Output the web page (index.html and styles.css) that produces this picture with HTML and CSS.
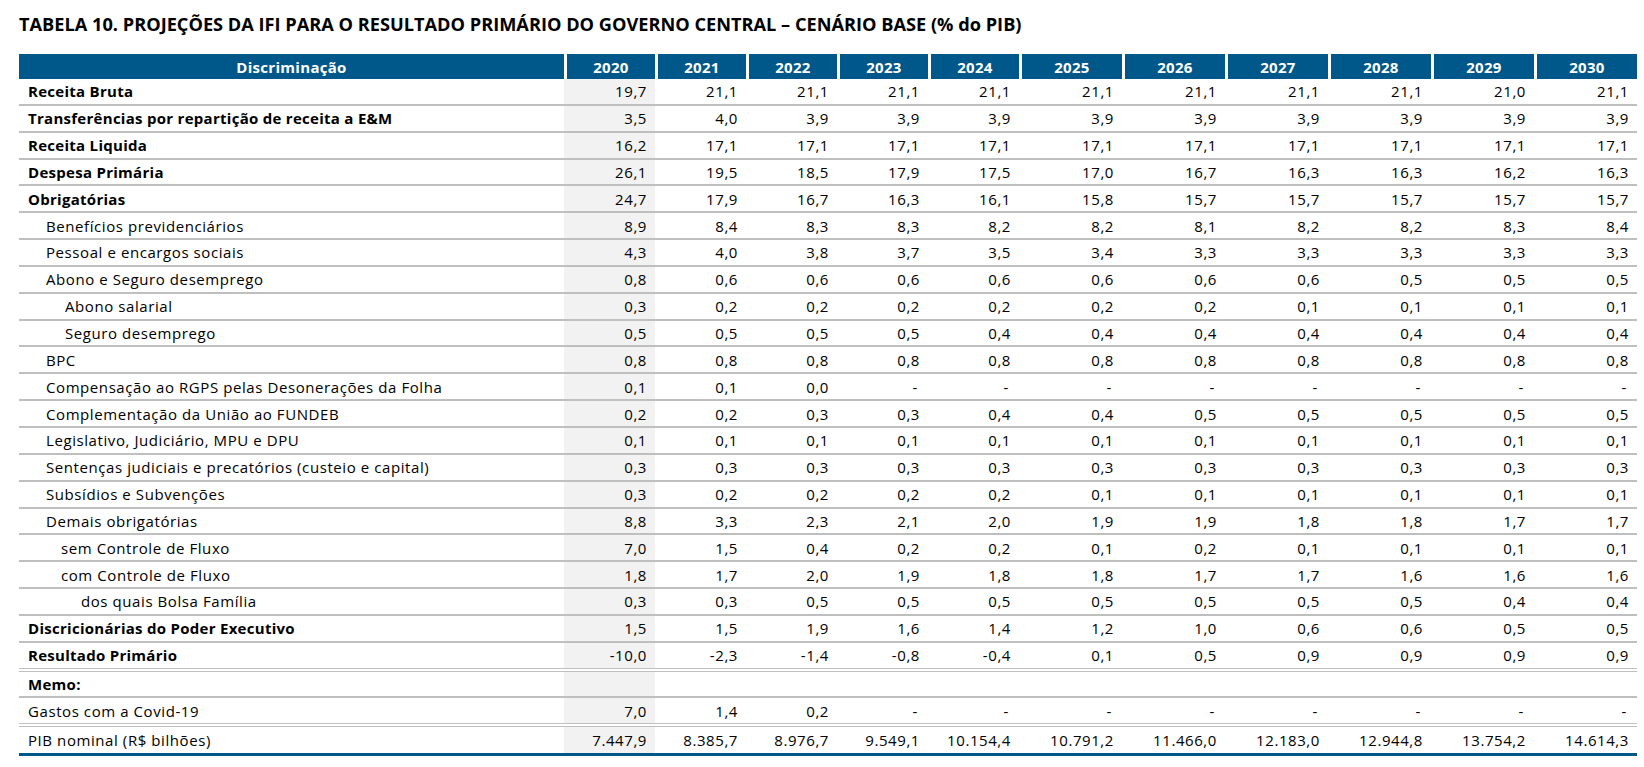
FILE: index.html
```html
<!DOCTYPE html>
<html lang="pt-BR">
<head>
<meta charset="utf-8">
<title>Tabela 10</title>
<link rel="stylesheet" href="styles.css">
</head>
<body>
<div class="page">
  <h1 class="title">TABELA 10. PROJEÇÕES DA IFI PARA O RESULTADO PRIMÁRIO DO GOVERNO CENTRAL – CENÁRIO BASE (% do PIB)</h1>
  <div class="tbl">
    <div class="grid hd">
      <div>Discriminação</div>
      <div class="y">2020</div><div class="y">2021</div><div class="y">2022</div><div class="y">2023</div><div class="y">2024</div>
      <div class="y">2025</div><div class="y">2026</div><div class="y">2027</div><div class="y">2028</div><div class="y">2029</div><div class="y">2030</div>
    </div>

    <div class="grid row"><div class="lab b">Receita Bruta</div><div class="g">19,7</div><div>21,1</div><div>21,1</div><div>21,1</div><div>21,1</div><div>21,1</div><div>21,1</div><div>21,1</div><div>21,1</div><div>21,0</div><div>21,1</div></div>
    <div class="grid row"><div class="lab b">Transferências por repartição de receita a E&amp;M</div><div class="g">3,5</div><div>4,0</div><div>3,9</div><div>3,9</div><div>3,9</div><div>3,9</div><div>3,9</div><div>3,9</div><div>3,9</div><div>3,9</div><div>3,9</div></div>
    <div class="grid row"><div class="lab b">Receita Liquida</div><div class="g">16,2</div><div>17,1</div><div>17,1</div><div>17,1</div><div>17,1</div><div>17,1</div><div>17,1</div><div>17,1</div><div>17,1</div><div>17,1</div><div>17,1</div></div>
    <div class="grid row"><div class="lab b">Despesa Primária</div><div class="g">26,1</div><div>19,5</div><div>18,5</div><div>17,9</div><div>17,5</div><div>17,0</div><div>16,7</div><div>16,3</div><div>16,3</div><div>16,2</div><div>16,3</div></div>
    <div class="grid row"><div class="lab b">Obrigatórias</div><div class="g">24,7</div><div>17,9</div><div>16,7</div><div>16,3</div><div>16,1</div><div>15,8</div><div>15,7</div><div>15,7</div><div>15,7</div><div>15,7</div><div>15,7</div></div>
    <div class="grid row"><div class="lab l1">Benefícios previdenciários</div><div class="g">8,9</div><div>8,4</div><div>8,3</div><div>8,3</div><div>8,2</div><div>8,2</div><div>8,1</div><div>8,2</div><div>8,2</div><div>8,3</div><div>8,4</div></div>
    <div class="grid row"><div class="lab l1">Pessoal e encargos sociais</div><div class="g">4,3</div><div>4,0</div><div>3,8</div><div>3,7</div><div>3,5</div><div>3,4</div><div>3,3</div><div>3,3</div><div>3,3</div><div>3,3</div><div>3,3</div></div>
    <div class="grid row"><div class="lab l1">Abono e Seguro desemprego</div><div class="g">0,8</div><div>0,6</div><div>0,6</div><div>0,6</div><div>0,6</div><div>0,6</div><div>0,6</div><div>0,6</div><div>0,5</div><div>0,5</div><div>0,5</div></div>
    <div class="grid row"><div class="lab l2">Abono salarial</div><div class="g">0,3</div><div>0,2</div><div>0,2</div><div>0,2</div><div>0,2</div><div>0,2</div><div>0,2</div><div>0,1</div><div>0,1</div><div>0,1</div><div>0,1</div></div>
    <div class="grid row"><div class="lab l2">Seguro desemprego</div><div class="g">0,5</div><div>0,5</div><div>0,5</div><div>0,5</div><div>0,4</div><div>0,4</div><div>0,4</div><div>0,4</div><div>0,4</div><div>0,4</div><div>0,4</div></div>
    <div class="grid row"><div class="lab l1">BPC</div><div class="g">0,8</div><div>0,8</div><div>0,8</div><div>0,8</div><div>0,8</div><div>0,8</div><div>0,8</div><div>0,8</div><div>0,8</div><div>0,8</div><div>0,8</div></div>
    <div class="grid row"><div class="lab l1">Compensação ao RGPS pelas Desonerações da Folha</div><div class="g">0,1</div><div>0,1</div><div>0,0</div><div class="d">-</div><div class="d">-</div><div class="d">-</div><div class="d">-</div><div class="d">-</div><div class="d">-</div><div class="d">-</div><div class="d">-</div></div>
    <div class="grid row"><div class="lab l1">Complementação da União ao FUNDEB</div><div class="g">0,2</div><div>0,2</div><div>0,3</div><div>0,3</div><div>0,4</div><div>0,4</div><div>0,5</div><div>0,5</div><div>0,5</div><div>0,5</div><div>0,5</div></div>
    <div class="grid row"><div class="lab l1">Legislativo, Judiciário, MPU e DPU</div><div class="g">0,1</div><div>0,1</div><div>0,1</div><div>0,1</div><div>0,1</div><div>0,1</div><div>0,1</div><div>0,1</div><div>0,1</div><div>0,1</div><div>0,1</div></div>
    <div class="grid row"><div class="lab l1">Sentenças judiciais e precatórios (custeio e capital)</div><div class="g">0,3</div><div>0,3</div><div>0,3</div><div>0,3</div><div>0,3</div><div>0,3</div><div>0,3</div><div>0,3</div><div>0,3</div><div>0,3</div><div>0,3</div></div>
    <div class="grid row"><div class="lab l1">Subsídios e Subvenções</div><div class="g">0,3</div><div>0,2</div><div>0,2</div><div>0,2</div><div>0,2</div><div>0,1</div><div>0,1</div><div>0,1</div><div>0,1</div><div>0,1</div><div>0,1</div></div>
    <div class="grid row"><div class="lab l1">Demais obrigatórias</div><div class="g">8,8</div><div>3,3</div><div>2,3</div><div>2,1</div><div>2,0</div><div>1,9</div><div>1,9</div><div>1,8</div><div>1,8</div><div>1,7</div><div>1,7</div></div>
    <div class="grid row"><div class="lab l2b">sem Controle de Fluxo</div><div class="g">7,0</div><div>1,5</div><div>0,4</div><div>0,2</div><div>0,2</div><div>0,1</div><div>0,2</div><div>0,1</div><div>0,1</div><div>0,1</div><div>0,1</div></div>
    <div class="grid row"><div class="lab l2b">com Controle de Fluxo</div><div class="g">1,8</div><div>1,7</div><div>2,0</div><div>1,9</div><div>1,8</div><div>1,8</div><div>1,7</div><div>1,7</div><div>1,6</div><div>1,6</div><div>1,6</div></div>
    <div class="grid row"><div class="lab l3">dos quais Bolsa Família</div><div class="g">0,3</div><div>0,3</div><div>0,5</div><div>0,5</div><div>0,5</div><div>0,5</div><div>0,5</div><div>0,5</div><div>0,5</div><div>0,4</div><div>0,4</div></div>
    <div class="grid row"><div class="lab b">Discricionárias do Poder Executivo</div><div class="g">1,5</div><div>1,5</div><div>1,9</div><div>1,6</div><div>1,4</div><div>1,2</div><div>1,0</div><div>0,6</div><div>0,6</div><div>0,5</div><div>0,5</div></div>
    <div class="grid row dbl"><div class="lab b">Resultado Primário</div><div class="g">-10,0</div><div>-2,3</div><div>-1,4</div><div>-0,8</div><div>-0,4</div><div>0,1</div><div>0,5</div><div>0,9</div><div>0,9</div><div>0,9</div><div>0,9</div></div>
    <div class="grid row"><div class="lab b">Memo:</div><div class="g"></div><div></div><div></div><div></div><div></div><div></div><div></div><div></div><div></div><div></div><div></div></div>
    <div class="grid row dbl"><div class="lab">Gastos com a Covid-19</div><div class="g">7,0</div><div>1,4</div><div>0,2</div><div class="d">-</div><div class="d">-</div><div class="d">-</div><div class="d">-</div><div class="d">-</div><div class="d">-</div><div class="d">-</div><div class="d">-</div></div>
    <div class="grid row pib"><div class="lab">PIB nominal (R$ bilhões)</div><div class="g">7.447,9</div><div>8.385,7</div><div>8.976,7</div><div>9.549,1</div><div>10.154,4</div><div>10.791,2</div><div>11.466,0</div><div>12.183,0</div><div>12.944,8</div><div>13.754,2</div><div>14.614,3</div></div>
  </div>
</div>
</body>
</html>
```

FILE: styles.css
```css
html, body {
  margin: 0;
  padding: 0;
  background: #ffffff;
}

body {
  font-family: "Open Sans", "Noto Sans", "Liberation Sans", sans-serif;
  color: #000000;
}

.page {
  padding: 12px 0 0 19px;
}

.title {
  margin: 0 0 18px 0;
  font-size: 18.2px;
  font-weight: 700;
  line-height: 24px;
  white-space: nowrap;
  color: #000000;
}

.tbl {
  width: 1618px;
}

.grid {
  display: grid;
  grid-template-columns: 545px repeat(5, 91px) repeat(6, 103px);
}

.hd {
  height: 25px;
}

.hd > div {
  background: #00588a;
  color: #ffffff;
  font-size: 15px;
  font-weight: 700;
  letter-spacing: 0.3px;
  display: flex;
  align-items: center;
  justify-content: center;
  box-sizing: border-box;
}

.hd > .y {
  border-left: 3px solid #ffffff;
}

.row {
  box-sizing: border-box;
  height: 26.85px;
  border-bottom: 2px solid #bfbfbf;
  font-size: 15px;
  letter-spacing: 0.58px;
}

.row > div {
  display: flex;
  align-items: center;
  justify-content: flex-end;
  padding-right: 8px;
  white-space: nowrap;
}

.row > .lab {
  justify-content: flex-start;
  padding-left: 9px;
  padding-right: 0;
}

.row > .b {
  font-weight: 700;
  letter-spacing: 0.28px;
}

.row > .l1 { padding-left: 27px; }
.row > .l2 { padding-left: 46px; }
.row > .l2b { padding-left: 42px; }
.row > .l3 { padding-left: 62px; }

.row > .g {
  background: #f2f2f2;
}

.row > .d {
  padding-right: 10px;
}

.row.dbl {
  height: 28.85px;
  border-bottom: 4px double #bfbfbf;
}

.row.pib {
  height: 29px;
  border-bottom: 3px solid #00588a;
}
```
